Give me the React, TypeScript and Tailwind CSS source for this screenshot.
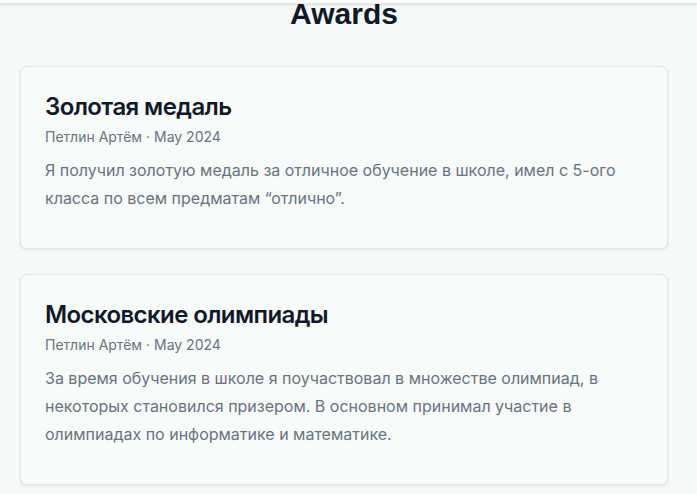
const awards = [
  {
    title: "Золотая медаль",
    meta: "Петлин Артём · May 2024",
    text: "Я получил золотую медаль за отличное обучение в школе, имел с 5-ого класса по всем предматам “отлично”.",
  },
  {
    title: "Московские олимпиады",
    meta: "Петлин Артём · May 2024",
    text: "За время обучения в школе я поучаствовал в множестве олимпиад, в некоторых становился призером. В основном принимал участие в олимпиадах по информатике и математике.",
  },
];

export default function App() {
  return (
    <div className="relative min-h-[494px] w-full overflow-hidden bg-[#f5f9f8]">
      {/* header edge, scrolled page */}
      <div className="absolute left-0 right-0 top-0 z-10 h-[4px] border-b border-[#e3e7e6] bg-white shadow-sm" />

      <h2 className="-mt-1 text-center text-3xl font-bold text-[#111827] [font-family:'Liberation_Sans',Arial,sans-serif] pr-[9px]">
        Awards
      </h2>

      <div className="ml-5 mt-[34px] flex w-[648px] flex-col gap-[25px] [font-family:Inter,sans-serif]">
        {awards.map((a) => (
          <div
            key={a.title}
            className="rounded-md border border-[#e2e6e5] bg-[#f7fbfa] px-6 pb-9 pt-6 shadow-[0_1px_3px_rgba(0,0,0,0.08)]"
          >
            <h3 className="text-2xl font-semibold tracking-tight text-[#111827]">{a.title}</h3>
            <p className="mt-1 text-sm text-[#6b7280]">{a.meta}</p>
            <p className="mt-[9px] text-base leading-7 text-[#6b7280]">{a.text}</p>
          </div>
        ))}
      </div>
    </div>
  );
}
